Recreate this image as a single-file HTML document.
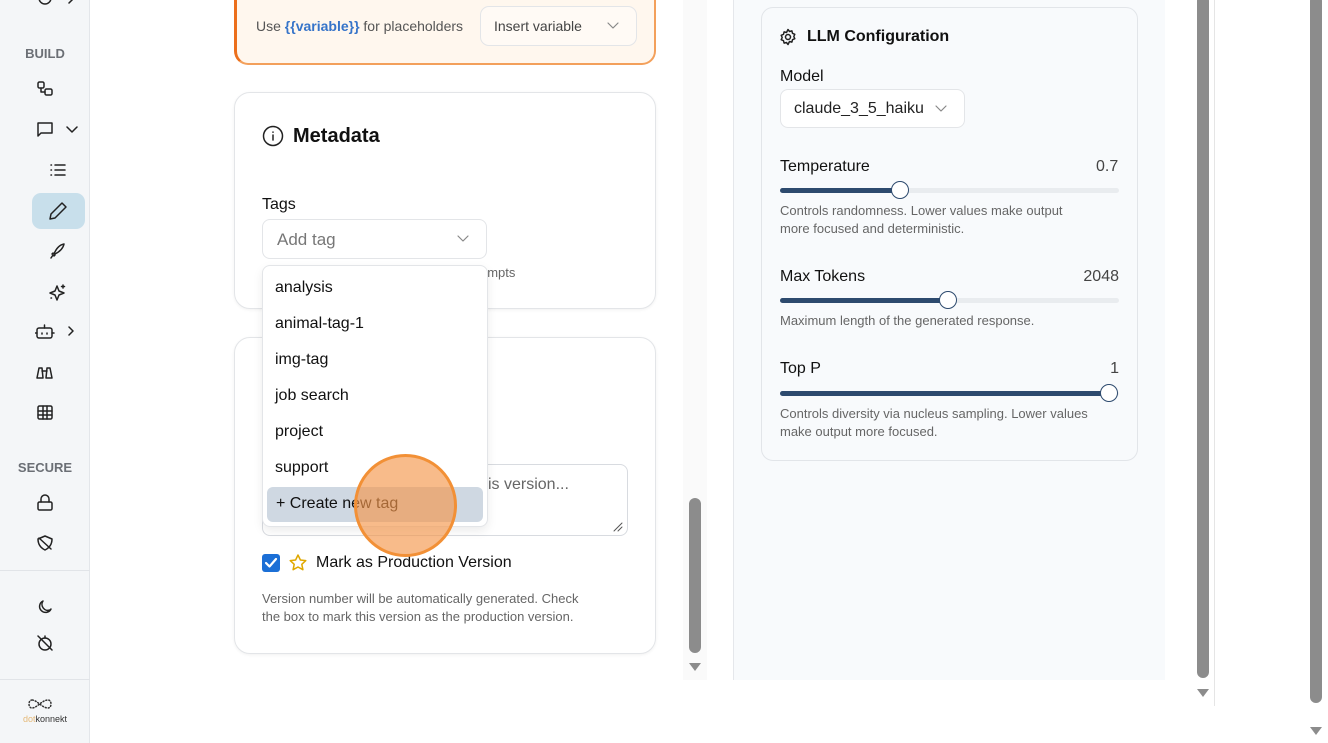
<!DOCTYPE html>
<html><head><meta charset="utf-8"><style>
*{box-sizing:border-box;margin:0;padding:0}
body{width:1328px;height:743px;overflow:hidden;background:#fff;font-family:"Liberation Sans",sans-serif;color:#111;position:relative}
.abs{position:absolute}
.side{left:0;top:0;width:90px;height:743px;background:#f4f6f8;border-right:1px solid #e3e6ea}
.sec{font-size:13px;font-weight:bold;color:#6b6f75;width:90px;text-align:center}
svg{fill:none;stroke:#222;stroke-width:1.5;stroke-linecap:round;stroke-linejoin:round}
.card{background:#fff;border:1px solid #e3e5e8;border-radius:16px;box-shadow:0 1px 3px rgba(0,0,0,.06)}
.sel{border:1px solid #e3e5e8;border-radius:8px;background:#fff}
.opt{left:275px;font-size:16px;color:#111}
.lbl{font-size:16px;color:#111}
.hint{font-size:13px;color:#666;line-height:18px}
.track{height:5px;background:#e9ecef;border-radius:3px}
.fill{height:5px;background:#2d4a6e;border-radius:3px;left:0;top:0}
.knob{width:18px;height:18px;border-radius:50%;background:#fff;border:1.5px solid #2d4a6e;top:-7px}
.sb{background:#8c8c8c;border-radius:6px;width:12px}
.arr{width:0;height:0;border-left:6px solid transparent;border-right:6px solid transparent;border-top:8px solid #8c8c8c}
.chev{stroke:#888 !important;stroke-width:1.2}
</style></head><body>
<div class="abs side"></div>
<svg class="abs" style="left:36px;top:-8px" width="18" height="16" viewBox="0 0 18 16"><circle cx="9" cy="6" r="6"/><path d="M9 3v3l2 1"/></svg>
<svg class="abs" style="left:66px;top:-6px" width="10" height="12"><path d="M3 1l4 4-4 4"/></svg>
<div class="abs sec" style="top:46px">BUILD</div>
<svg class="abs" style="left:36px;top:80px" width="18" height="18"><rect x="2" y="2" width="6" height="6" rx="1.5"/><rect x="9" y="9" width="7" height="6" rx="1.5"/><path d="M5 8v4h4"/></svg>
<svg class="abs" style="left:36px;top:120px" width="18" height="18"><path d="M2 3h14v10H5l-3 3z"/></svg>
<svg class="abs" style="left:66px;top:124px" width="12" height="10"><path d="M1 3l5 5 5-5"/></svg>
<svg class="abs" style="left:49px;top:162px" width="18" height="16"><path d="M6 3h10M6 8h10M6 13h10M2 3h.5M2 8h.5M2 13h.5"/></svg>
<div class="abs" style="left:32px;top:193px;width:53px;height:36px;background:#c8dfeb;border-radius:9px"></div>
<svg class="abs" style="left:48px;top:201px" width="20" height="20"><path d="M14 2l4 4L7 17l-5 1 1-5z"/></svg>
<svg class="abs" style="left:48px;top:242px" width="18" height="18"><path d="M6 12c2-5 5-9 10-10-1 5-5 8-9 10zM5 11l-1 1M7 13l-1 1M3 16l2-3"/></svg>
<svg class="abs" style="left:48px;top:283px" width="20" height="20"><path d="M9 3l2 5 5 2-5 2-2 5-2-5-5-2 5-2zM15 2v3M13.5 3.5h3M3 15h.5"/></svg>
<svg class="abs" style="left:35px;top:323px" width="20" height="18"><rect x="2" y="5" width="15" height="10" rx="2"/><path d="M9.5 2v3M0.5 10h1.5M17 10h2M7 10v1M12 10v1"/></svg>
<svg class="abs" style="left:66px;top:326px" width="10" height="12"><path d="M3 1l4 4-4 4"/></svg>
<svg class="abs" style="left:35px;top:363px" width="20" height="18"><path d="M2 15l2-10h3l1 10zM11 15l1-10h3l2 10zM7 8h5M2 15h6M11 15h6"/></svg>
<svg class="abs" style="left:36px;top:404px" width="18" height="18"><rect x="2" y="2" width="14" height="13" rx="1.5"/><path d="M2 7h14M2 11h14M7 2v13M11 2v13"/></svg>
<div class="abs sec" style="top:460px">SECURE</div>
<svg class="abs" style="left:36px;top:494px" width="18" height="18"><rect x="2" y="8" width="14" height="8" rx="1.5"/><path d="M5 8V5a4 4 0 0 1 8 0v3"/></svg>
<svg class="abs" style="left:36px;top:534px" width="18" height="18"><path d="M9 2l7 3c0 6-3 9-7 11-4-2-7-5-7-11zM3 4l12 11"/></svg>
<div class="abs" style="left:0;top:570px;width:90px;border-top:1px solid #e1e4e8"></div>
<svg class="abs" style="left:36px;top:598px" width="18" height="18"><path d="M14 12A6 6 0 0 1 7 3a6 6 0 1 0 8 8z"/></svg>
<svg class="abs" style="left:36px;top:634px" width="18" height="18"><circle cx="9" cy="10" r="6"/><path d="M2 2l14 14M9 4V2"/></svg>
<div class="abs" style="left:0;top:679px;width:90px;border-top:1px solid #e1e4e8"></div>
<svg class="abs" style="left:26px;top:697px" width="36" height="14"><path d="M6 3c-4 0-4 8 0 8 5 0 10-8 16-8 4 0 4 8 0 8-6 0-11-8-16-8" style="stroke:#333;stroke-dasharray:1 2"/></svg>
<div class="abs" style="left:0;top:714px;width:90px;text-align:center;font-size:9px;color:#333"><span style="color:#e5b978">dot</span>konnekt</div>

<div class="abs" style="left:234px;top:-20px;width:422px;height:85px;background:#fff7ee;border:2px solid #f3a05b;border-left:3px solid #ec6f1c;border-radius:14px"></div>
<div class="abs" style="left:256px;top:18px;font-size:14px;color:#555">Use <span style="color:#3674c9;font-weight:bold">{{variable}}</span> for placeholders</div>
<div class="abs sel" style="left:480px;top:6px;width:157px;height:40px;border-radius:9px;background:#fffaf5"></div>
<div class="abs" style="left:494px;top:18px;font-size:14px;color:#444">Insert variable</div>
<svg class="abs" style="left:607px;top:21px" width="12" height="10"><path class="chev" d="M1 2l5 5 5-5"/></svg>

<div class="abs card" style="left:234px;top:92px;width:422px;height:217px"></div>
<svg class="abs" style="left:262px;top:125px" width="22" height="22" style="stroke-width:2"><circle cx="11" cy="11" r="9.5"/><path d="M11 10v5M11 7v.3"/></svg>
<div class="abs" style="left:293px;top:125px;font-size:20px;font-weight:bold">Metadata</div>
<div class="abs lbl" style="left:262px;top:196px">Tags</div>
<div class="abs sel" style="left:262px;top:219px;width:225px;height:40px"></div>
<div class="abs" style="left:277px;top:230px;font-size:17px;color:#777">Add tag</div>
<svg class="abs" style="left:457px;top:234px" width="12" height="10"><path class="chev" d="M1 2l5 5 5-5"/></svg>
<div class="abs" style="left:480px;top:265px;font-size:13px;color:#666">ompts</div>

<div class="abs card" style="left:234px;top:337px;width:422px;height:317px"></div>
<div class="abs" style="left:262px;top:464px;width:366px;height:72px;border:1px solid #d8dbe0;border-radius:8px"></div>
<div class="abs" style="left:488px;top:476px;font-size:16px;color:#666">is version...</div>
<svg class="abs" style="left:612px;top:521px" width="12" height="12"><path d="M2 10l8-8M6 10l4-4" style="stroke:#555;stroke-width:1"/></svg>
<div class="abs" style="left:262px;top:554px;width:18px;height:18px;background:#1b6fd6;border-radius:3px"></div>
<svg class="abs" style="left:264px;top:556px" width="14" height="14"><path d="M2 7l3.5 3.5L12 3" style="stroke:#fff;stroke-width:2.2"/></svg>
<svg class="abs" style="left:288px;top:553px" width="20" height="19"><path d="M10 2l2.4 5 5.4.6-4 3.7 1.1 5.4L10 14l-4.9 2.7 1.1-5.4-4-3.7 5.4-.6z" style="stroke:#e0a800"/></svg>
<div class="abs" style="left:316px;top:554px;font-size:16px;color:#111">Mark as Production Version</div>
<div class="abs hint" style="left:262px;top:590px;width:380px">Version number will be automatically generated. Check<br>the box to mark this version as the production version.</div>

<div class="abs" style="left:262px;top:265px;width:226px;height:262px;background:#fff;border:1px solid #e3e5e8;border-radius:8px;box-shadow:0 4px 10px rgba(0,0,0,.08)"></div>
<div class="abs opt" style="top:279px">analysis</div>
<div class="abs opt" style="top:315px">animal-tag-1</div>
<div class="abs opt" style="top:351px">img-tag</div>
<div class="abs opt" style="top:387px">job search</div>
<div class="abs opt" style="top:423px">project</div>
<div class="abs opt" style="top:459px">support</div>
<div class="abs" style="left:267px;top:487px;width:216px;height:35px;background:#cfd8e2;border-radius:6px"></div>
<div class="abs opt" style="top:495px;left:276px">+ Create new tag</div>
<div class="abs" style="left:354px;top:454px;width:103px;height:103px;border-radius:50%;background:rgba(245,150,75,.65);border:3px solid #f29036"></div>

<div class="abs" style="left:683px;top:0;width:24px;height:680px;background:rgba(245,245,245,.5)"></div>
<div class="abs sb" style="left:689px;top:498px;height:155px"></div>
<div class="abs arr" style="left:689px;top:663px"></div>

<div class="abs" style="left:733px;top:0;width:432px;height:680px;background:#f8fafc;border-left:1px solid #e5e7eb"></div>
<div class="abs" style="left:761px;top:7px;width:377px;height:454px;border:1px solid #e2e5e9;border-radius:12px;background:#f8fafc"></div>
<svg class="abs" style="left:779px;top:28px" width="18" height="18"><circle cx="9" cy="9" r="2.5"/><path d="M9 1.5l1.5 2 2.4-.6.6 2.4 2.3 1-1 2.2 1 2.2-2.3 1-.6 2.4-2.4-.6L9 16.5l-1.5-2-2.4.6-.6-2.4-2.3-1 1-2.2-1-2.2 2.3-1 .6-2.4 2.4.6z"/></svg>
<div class="abs" style="left:807px;top:28px;font-size:16px;font-weight:bold">LLM Configuration</div>
<div class="abs lbl" style="left:780px;top:68px">Model</div>
<div class="abs sel" style="left:780px;top:89px;width:185px;height:39px"></div>
<div class="abs" style="left:794px;top:100px;font-size:16px;color:#222">claude_3_5_haiku</div>
<svg class="abs" style="left:935px;top:104px" width="12" height="10"><path class="chev" d="M1 2l5 5 5-5"/></svg>

<div class="abs lbl" style="left:780px;top:158px">Temperature</div>
<div class="abs" style="left:1096px;top:158px;font-size:16px;color:#444">0.7</div>
<div class="abs track" style="left:780px;top:188px;width:339px"><div class="abs fill" style="width:120px"></div><div class="abs knob" style="left:111px"></div></div>
<div class="abs hint" style="left:780px;top:202px;width:315px">Controls randomness. Lower values make output more focused and deterministic.</div>

<div class="abs lbl" style="left:780px;top:268px">Max Tokens</div>
<div class="abs" style="left:1080px;top:268px;font-size:16px;color:#444;width:39px;text-align:right">2048</div>
<div class="abs track" style="left:780px;top:298px;width:339px"><div class="abs fill" style="width:168px"></div><div class="abs knob" style="left:159px"></div></div>
<div class="abs hint" style="left:780px;top:312px">Maximum length of the generated response.</div>

<div class="abs lbl" style="left:780px;top:360px">Top P</div>
<div class="abs" style="left:1100px;top:360px;font-size:16px;color:#444;width:19px;text-align:right">1</div>
<div class="abs track" style="left:780px;top:391px;width:339px"><div class="abs fill" style="width:330px"></div><div class="abs knob" style="left:320px"></div></div>
<div class="abs hint" style="left:780px;top:405px;width:310px">Controls diversity via nucleus sampling. Lower values make output more focused.</div>

<div class="abs sb" style="left:1197px;top:-5px;height:683px"></div>
<div class="abs arr" style="left:1197px;top:689px"></div>
<div class="abs" style="left:1214px;top:0;height:706px;border-left:1px solid #e5e5e5"></div>
<div class="abs sb" style="left:1310px;top:-5px;height:708px"></div>
<div class="abs arr" style="left:1310px;top:727px"></div>
</body></html>
